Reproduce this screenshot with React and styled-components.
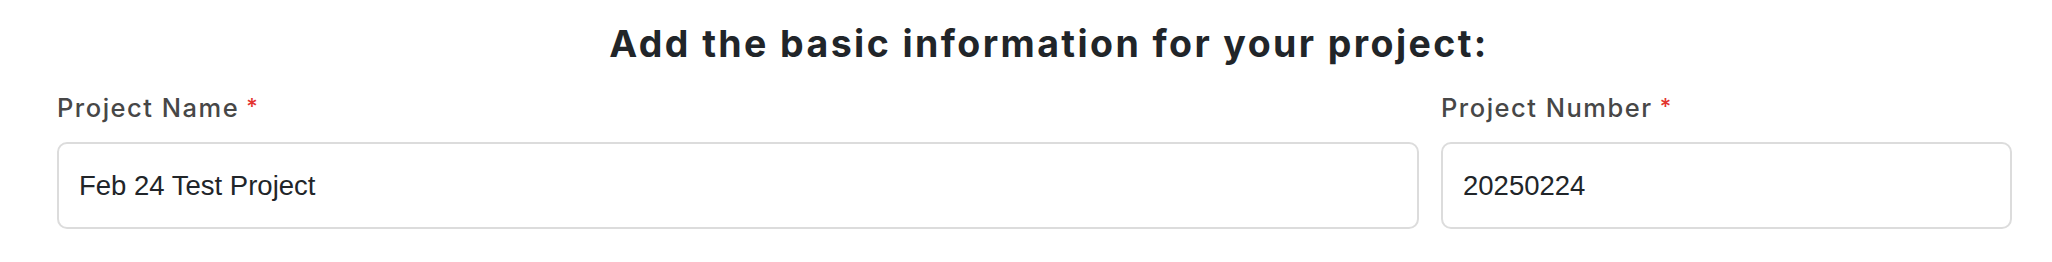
import React from 'react';
import styled, { createGlobalStyle } from 'styled-components';

const GlobalStyle = createGlobalStyle`
  html, body {
    margin: 0;
    padding: 0;
    background: #ffffff;
  }
  * {
    box-sizing: border-box;
  }
`;

const Section = styled.section`
  padding: 25px 40px 0 57px;
  font-family: Inter, "Open Sans", sans-serif;
`;

const Heading = styled.h2`
  margin: 0 0 32px;
  padding-left: 29px;
  text-align: center;
  font-size: 37.5px;
  line-height: 1;
  font-weight: 700;
  color: #212529;
  letter-spacing: 2.4px;
`;

const Row = styled.div`
  display: grid;
  grid-template-columns: 1362fr 571fr;
  column-gap: 22px;
`;

const Field = styled.div`
  display: flex;
  flex-direction: column;
  gap: 22px;
`;

const Label = styled.label`
  display: flex;
  align-items: flex-start;
  font-size: 25.5px;
  line-height: 1;
  font-weight: 500;
  letter-spacing: 1.5px;
  color: #474747;
`;

const Required = styled.span`
  margin-left: 7px;
  color: #e3342f;
  font-size: 22px;
  line-height: 1;
`;

const Input = styled.input`
  height: 87px;
  width: 100%;
  padding: 0 20px;
  border: 2px solid #dcdcdc;
  border-radius: 10px;
  background: #fff;
  font-family: "Liberation Sans", Arial, sans-serif;
  font-size: 27.5px;
  color: #212529;
  outline: none;
`;

function FormField({ label, value, required }) {
  return (
    <Field>
      <Label>
        {label}
        {required && <Required>*</Required>}
      </Label>
      <Input defaultValue={value} />
    </Field>
  );
}

export default function App() {
  return (
    <>
      <GlobalStyle />
      <Section>
        <Heading>Add the basic information for your project:</Heading>
        <Row>
          <FormField label="Project Name" value="Feb 24 Test Project" required />
          <FormField label="Project Number" value="20250224" required />
        </Row>
      </Section>
    </>
  );
}
